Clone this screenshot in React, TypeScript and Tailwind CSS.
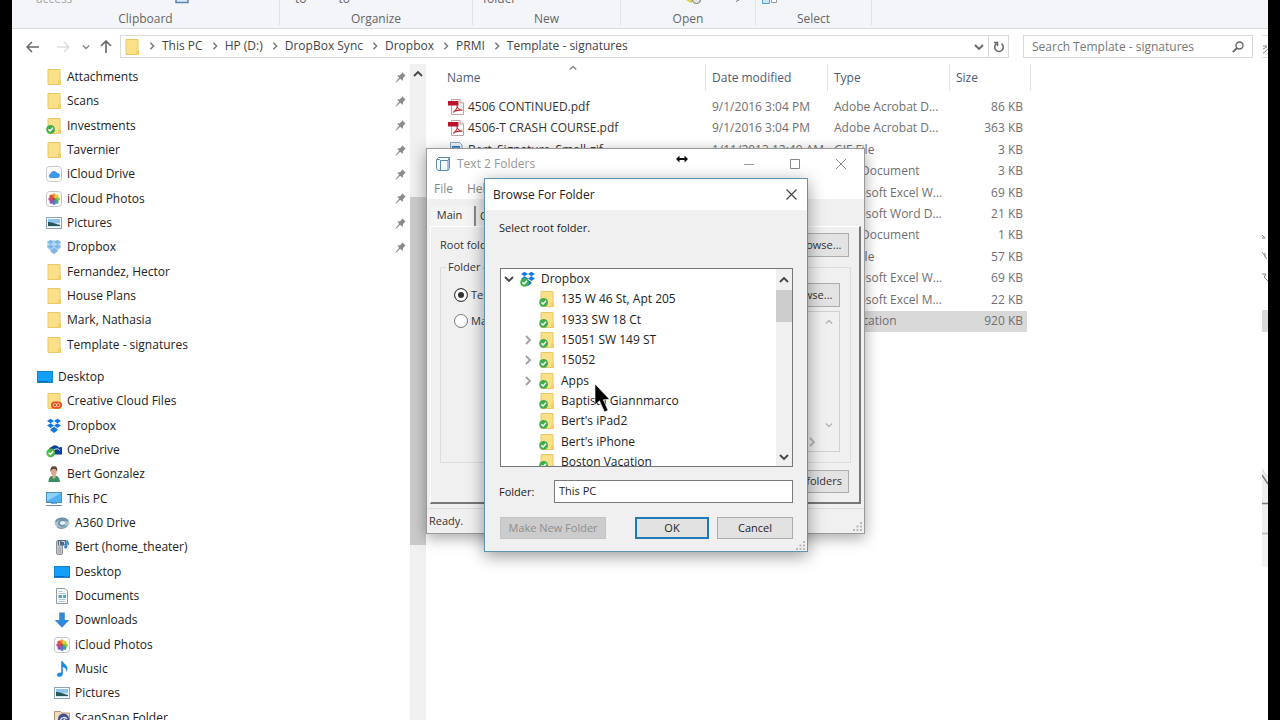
import type { ReactNode } from "react";

type IconName =
  | "folder"
  | "folderSync"
  | "folderCloud"
  | "icloud"
  | "photos"
  | "pictures"
  | "dropbox"
  | "dropboxPale"
  | "dropboxSync"
  | "desktop"
  | "onedrive"
  | "user"
  | "pc"
  | "a360"
  | "theater"
  | "documents"
  | "downloads"
  | "music"
  | "scansnap"
  | "pdf"
  | "gif";

const DROPBOX =
  "M4.6 .8 8 3 4.6 5.3 1 3zM11.4 .8 15 3 11.4 5.3 8 3zM1 7.6 4.6 5.3 8 7.6 4.6 9.9zM15 7.6 11.4 5.3 8 7.6 11.4 9.9zM4.6 11 8 8.7 11.4 11v1.5L8 15l-3.4-2.5z";

const FOLDER = (
  <>
    <path d="M2 .5h12v10.5l.5.5v4H2z" fill="#fbe08a" stroke="#e9c766" strokeWidth="1" />
    <path d="M12 11.5h2.5v4H12z" fill="#f3cf69" />
  </>
);

const CHECK = (
  <>
    <circle cx="4.6" cy="11.4" r="4.4" fill="#3fae49" />
    <path d="M2.4 11.4 4.1 13 7 9.8" fill="none" stroke="#fff" strokeWidth="1.5" />
  </>
);

const ICONS: Record<IconName, ReactNode> = {
  folder: FOLDER,
  folderSync: (
    <>
      {FOLDER}
      {CHECK}
    </>
  ),
  folderCloud: (
    <>
      {FOLDER}
      <rect x="5" y="8.5" width="11" height="7.2" rx="3.6" fill="#e2501f" />
      <circle cx="8.8" cy="12.1" r="1.7" fill="none" stroke="#fbd9cb" strokeWidth=".8" />
      <circle cx="12.2" cy="12.1" r="1.7" fill="none" stroke="#fbd9cb" strokeWidth=".8" />
    </>
  ),
  icloud: (
    <>
      <rect x=".5" y=".5" width="15" height="15" rx="3" fill="#fff" stroke="#c9c9d2" />
      <path d="M4.6 12a2.1 2.1 0 0 1-.3-4.1 3.7 3.7 0 0 1 6.9-1A2.6 2.6 0 0 1 12 12z" fill="#3b97ee" />
    </>
  ),
  photos: (
    <>
      <rect x=".5" y=".5" width="15" height="15" rx="3" fill="#fff" stroke="#c4c4cc" />
      <ellipse cx="8" cy="4.8" rx="1.9" ry="2.5" fill="#f49b24" />
      <ellipse cx="10.4" cy="5.8" rx="1.9" ry="2.5" fill="#e8d22c" transform="rotate(45 10.4 5.8)" />
      <ellipse cx="11.3" cy="8.2" rx="2.5" ry="1.9" fill="#8cc63f" />
      <ellipse cx="10.3" cy="10.5" rx="1.9" ry="2.5" fill="#3ea487" transform="rotate(-45 10.3 10.5)" />
      <ellipse cx="8" cy="11.4" rx="1.9" ry="2.5" fill="#4f7fd0" />
      <ellipse cx="5.7" cy="10.4" rx="1.9" ry="2.5" fill="#8c55b0" transform="rotate(45 5.7 10.4)" />
      <ellipse cx="4.7" cy="8.1" rx="2.5" ry="1.9" fill="#c6458b" />
      <ellipse cx="5.6" cy="5.8" rx="1.9" ry="2.5" fill="#e4503a" transform="rotate(-45 5.6 5.8)" />
      <circle cx="8" cy="8.1" r="1.3" fill="#8a5a4a" />
    </>
  ),
  pictures: (
    <>
      <rect x=".5" y="2.5" width="15" height="11" fill="#f6fafc" stroke="#8fa3b5" />
      <path d="M2 4h12v4H2z" fill="#8fc4ef" />
      <path d="M2 8h12v4H2z" fill="#d5e6ee" />
      <path d="M2 7c3 0 6 1.3 12 3v1H2z" fill="#25565a" />
    </>
  ),
  dropbox: <path d={DROPBOX} fill="#1379dc" />,
  dropboxPale: (
    <>
      <path d="M1.2 3 8 1 14.8 3v6L8 15.5 1.2 9z" fill="#b9d9f5" />
      <path d={DROPBOX} fill="#7fb5e8" />
    </>
  ),
  dropboxSync: (
    <>
      <path d={DROPBOX} fill="#1379dc" />
      {CHECK}
    </>
  ),
  desktop: (
    <>
      <rect x="0" y="2" width="16" height="12" fill="#1583d4" />
      <rect x="1" y="3" width="14" height="10" fill="#12a0fb" />
      <path d="M1 12.5h10M12 12.5h1M14 12.5h1" stroke="#0b6cb5" />
    </>
  ),
  onedrive: (
    <>
      <path d="M3 9a3 3 0 0 1 2.5-4A4.5 4.5 0 0 1 13 5.5 3.5 3.5 0 0 1 16 12.5H5z" fill="#0d3f94" />
      <path d="M6.5 12.5A3.5 3.5 0 0 1 9 7.2a4 4 0 0 1 5 1.3" fill="none" stroke="#cfe0f5" />
      <circle cx="4.8" cy="10.8" r="4.4" fill="#4cb749" />
      <path d="M2.6 10.8 4.3 12.5 7.3 9.2" fill="none" stroke="#fff" strokeWidth="1.5" />
    </>
  ),
  user: (
    <>
      <path d="M2.5 16c0-4.5 2-6.5 5.5-6.5s5.5 2 6 6.5z" fill="#3b8d64" />
      <path d="M6.5 9.5h3v2L8 13l-1.5-1.5z" fill="#d9a98a" />
      <ellipse cx="7.8" cy="5.5" rx="2.9" ry="4" fill="#dca78a" />
      <path d="M4.5 6C4 2 5.5.3 8 .3S12 2 11 6c-.5-2.5-1.5-3-3-3s-3 .5-3.5 3z" fill="#5d4a3f" />
    </>
  ),
  pc: (
    <>
      <rect x=".5" y="1.5" width="15" height="10" fill="#4fb2f3" stroke="#4f8fbd" />
      <path d="M1 2h14L1 10z" fill="#8dd0fa" />
      <path d="M5 12.5h6" stroke="#6ab4e0" />
      <path d="M0 14.5h16" stroke="#7e8c99" />
    </>
  ),
  a360: (
    <>
      <ellipse cx="8" cy="8" rx="7.5" ry="5" fill="#b4c5d2" />
      <path d="M2 7c1-4 9-5 12-1-2-1-7-2-9 1-1 3 3 5 6 3" fill="none" stroke="#6f92a9" strokeWidth="1.8" />
      <ellipse cx="8.5" cy="8" rx="2.6" ry="1.7" fill="#edf4f8" />
      <path d="M3 11.5c2 2.5 7 2.5 10-.5" fill="none" stroke="#7d98aa" strokeWidth="1.4" />
    </>
  ),
  theater: (
    <>
      <rect x="2.5" y="1.5" width="6" height="14" rx="1.5" fill="#c7cacf" stroke="#8c9197" />
      <path d="M4 9h3M4 11h3M4 13h3" stroke="#8b9097" strokeWidth=".8" />
      <rect x="4" y="1" width="8" height="5.5" fill="#54687a" />
      <path d="M5.5 2v4M7.5 2.5h3v3" stroke="#c4d8e6" fill="none" />
      <path d="M12.8 8V1.5c.5 1.5 2.2 2 1.700 4.500" fill="none" stroke="#2a84d2" strokeWidth="1.3" />
      <circle cx="11.6" cy="8" r="1.5" fill="#2a84d2" />
    </>
  ),
  documents: (
    <>
      <path d="M2.5.5h8.500l2.500 2.500v12.500h-11z" fill="#fbfbfb" stroke="#9a9a9a" />
      <path d="M4.500 3.500h4M4.500 5.500h7M4.500 11.500h7M4.500 13.500h7" stroke="#a5cadd" />
      <path d="M4.500 7h3.500v3H4.500zM9 7h3v3H9z" fill="#5e9fc4" />
    </>
  ),
  downloads: <path d="M5.2.5h5.600v7.500h4.500L8 15.700.7 8h4.500z" fill="#3289dc" />,
  music: (
    <path
      d="M7.200.3h1.600c.3 2.400 4.600 3.500 4.600 7.200 0 1.500-.5 2.500-1.200 3.300.5-2.600-.9-4.200-3.400-4.800v6.800c0 1.900-1.300 3-3.300 3-1.500 0-2.500-.7-2.500-1.900 0-1.600 2-2.700 4.200-2.200z"
      fill="#1e8ae0"
    />
  ),
  scansnap: (
    <>
      <path d="M.5 1.500h6l1.500 1.500h7.500v13H.5z" fill="#f3d9c0" stroke="#b9977c" />
      <circle cx="9.500" cy="9" r="5.500" fill="#41518f" />
      <path d="M6.500 11c0-4 5-4.500 6.500-2M8 12l3-3" fill="none" stroke="#dfe5f5" strokeWidth="1.400" />
    </>
  ),
  pdf: (
    <>
      <path d="M3.500.5h8.500l3.500 3.500v11.500h-12z" fill="#fff" stroke="#c3a2a2" />
      <path d="M12 .5V4h3.500" fill="#eee" stroke="#c3a2a2" />
      <path d="M0 2h10.500v4.500H0z" fill="#b9142a" />
      <path
        d="M9 6c.7 2.500.2 4-3.700 7.500M9 6c0 3 2.500 5 5.500 5.200-3-.5-6 .3-8.500 1.300"
        fill="none"
        stroke="#c22a35"
        strokeWidth="1.200"
      />
    </>
  ),
  gif: (
    <>
      <path d="M2.500.5h9l2.500 2.500v12.500H2.500z" fill="#e9f3fb" stroke="#8aa3b8" />
      <path d="M4.500 4.500h7v6h-7z" fill="#5aa2dc" stroke="#2a6fb0" />
    </>
  ),
};

function Icon({ name }: { name: IconName }) {
  return (
    <svg viewBox="0 0 16 16" className="size-4 shrink-0" aria-hidden="true">
      {ICONS[name]}
    </svg>
  );
}

const CHEVRONS = {
  up: "M1 7 5 3 9 7",
  down: "M1 3 5 7 9 3",
  right: "M3 1 7 5 3 9",
};

function Chevron({ dir, className }: { dir: keyof typeof CHEVRONS; className: string }) {
  return (
    <svg viewBox="0 0 10 10" className={`shrink-0 ${className}`} fill="none" stroke="currentColor" aria-hidden="true">
      <path d={CHEVRONS[dir]} strokeWidth="1.8" />
    </svg>
  );
}

function Pin() {
  return (
    <svg viewBox="0 0 11 11" className="size-[11px] shrink-0" aria-hidden="true">
      <path
        d="M7.3.3 10.7 3.7 9.6 4.300 8 6.300 7.700 9 5.200 6.800 1 10.700.5 10.200 4.200 5.800 2.200 3.500 5 3.200 6.800 1.500z"
        fill="#8a8a8a"
      />
    </svg>
  );
}

function Grip() {
  return (
    <svg viewBox="0 0 9 9" className="size-[9px] shrink-0" fill="#b9b9b9" aria-hidden="true">
      <path d="M7 0h2v2H7zM7 3.500h2v2H7zM7 7h2v2H7zM3.500 3.500h2v2h-2zM3.500 7h2v2h-2zM0 7h2v2H0z" />
    </svg>
  );
}

interface NavItem {
  icon: IconName;
  label: string;
  pinned?: boolean;
  indent: "root" | "child" | "leaf";
}

const QUICK_ACCESS: NavItem[] = [
  { icon: "folder", label: "Attachments", pinned: true, indent: "child" },
  { icon: "folder", label: "Scans", pinned: true, indent: "child" },
  { icon: "folderSync", label: "Investments", pinned: true, indent: "child" },
  { icon: "folder", label: "Tavernier", pinned: true, indent: "child" },
  { icon: "icloud", label: "iCloud Drive", pinned: true, indent: "child" },
  { icon: "photos", label: "iCloud Photos", pinned: true, indent: "child" },
  { icon: "pictures", label: "Pictures", pinned: true, indent: "child" },
  { icon: "dropboxPale", label: "Dropbox", pinned: true, indent: "child" },
  { icon: "folder", label: "Fernandez, Hector", indent: "child" },
  { icon: "folder", label: "House Plans", indent: "child" },
  { icon: "folder", label: "Mark, Nathasia", indent: "child" },
  { icon: "folder", label: "Template - signatures", indent: "child" },
];

const DESKTOP_TREE: NavItem[] = [
  { icon: "desktop", label: "Desktop", indent: "root" },
  { icon: "folderCloud", label: "Creative Cloud Files", indent: "child" },
  { icon: "dropbox", label: "Dropbox", indent: "child" },
  { icon: "onedrive", label: "OneDrive", indent: "child" },
  { icon: "user", label: "Bert Gonzalez", indent: "child" },
  { icon: "pc", label: "This PC", indent: "child" },
  { icon: "a360", label: "A360 Drive", indent: "leaf" },
  { icon: "theater", label: "Bert (home_theater)", indent: "leaf" },
  { icon: "desktop", label: "Desktop", indent: "leaf" },
  { icon: "documents", label: "Documents", indent: "leaf" },
  { icon: "downloads", label: "Downloads", indent: "leaf" },
  { icon: "photos", label: "iCloud Photos", indent: "leaf" },
  { icon: "music", label: "Music", indent: "leaf" },
  { icon: "pictures", label: "Pictures", indent: "leaf" },
  { icon: "scansnap", label: "ScanSnap Folder", indent: "leaf" },
];

const INDENT = { root: "pl-[25px]", child: "pl-[34px]", leaf: "pl-[42px]" };

function NavList({ items, className }: { items: NavItem[]; className: string }) {
  return (
    <ul className={`grid auto-rows-fr ${className}`}>
      {items.map((item, index) => (
        <li key={index} className={`flex items-center gap-[5px] pr-1 ${INDENT[item.indent]}`}>
          <Icon name={item.icon} />
          <span className="flex-1 whitespace-nowrap">{item.label}</span>
          {item.pinned && <Pin />}
        </li>
      ))}
    </ul>
  );
}

function Sidebar() {
  return (
    <div className="flex w-[414px] shrink-0 text-[#222]">
      <nav className="flex flex-1 flex-col gap-2 pt-px">
        <NavList items={QUICK_ACCESS} className="h-[292px] shrink-0" />
        <NavList items={DESKTOP_TREE} className="h-[365px] shrink-0" />
      </nav>
      <div className="flex w-4 flex-col items-center bg-[#f0f0f0]">
        <button aria-label="Scroll up" className="mb-[113px] flex h-5 shrink-0 items-center">
          <Chevron dir="up" className="size-2.5 text-[#444]" />
        </button>
        <div className="h-[348px] w-full shrink-0 bg-[#cbcbcb]" />
      </div>
    </div>
  );
}

/* Lower edge of the ribbon: button captions above, group names below */
function RibbonGroup({ name, className, children }: { name: string; className: string; children?: ReactNode }) {
  return (
    <div className={`flex h-[25px] shrink-0 flex-col border-r border-[#dfe1e6] ${className}`}>
      <div className="flex h-[7px] shrink-0 items-end overflow-hidden text-[#666]">{children}</div>
      <div className="pt-1 text-center leading-4 text-[#666]">{name}</div>
    </div>
  );
}

function Ribbon() {
  return (
    <div className="flex h-[29px] shrink-0 border-b border-[#d9dbe0] bg-[#f4f5f9]">
      <RibbonGroup name="Clipboard" className="w-[268px]">
        <span className="ml-6 leading-4 text-[#a8a8a8]">access</span>
        <svg viewBox="0 0 14 7" className="ml-[103px] h-[7px] w-3.5" aria-hidden="true">
          <path d="M1 0v2.500h12V0" fill="#dfe8f3" stroke="#5d82b5" strokeWidth="1.500" />
        </svg>
      </RibbonGroup>
      <RibbonGroup name="Organize" className="w-[193px]">
        <span className="ml-[15px] leading-4">to</span>
        <span className="ml-8 leading-4">to</span>
      </RibbonGroup>
      <RibbonGroup name="New" className="w-[148px]">
        <span className="ml-2.5 leading-4">folder</span>
      </RibbonGroup>
      <RibbonGroup name="Open" className="w-[135px]">
        <svg viewBox="0 0 56 7" className="ml-[63px] h-[7px] w-14" aria-hidden="true">
          <path d="M2 0h9L7 3z" fill="#d9cf3f" />
          <circle cx="12.500" cy="-.5" r="4" fill="#e2e2e2" stroke="#8d8d8d" strokeWidth="1.200" />
          <path d="M52 1.500 55 0" stroke="#777" />
        </svg>
      </RibbonGroup>
      <RibbonGroup name="Select" className="w-[116px]">
        <svg viewBox="0 0 16 7" className="ml-1.5 h-[7px] w-4" aria-hidden="true">
          <path d="M.5 0v3.500h7V0" fill="#cfe6f7" stroke="#4ea0dc" />
          <path d="M9.500 0v2.500h5V0" fill="#fff" stroke="#8b9aa8" />
        </svg>
      </RibbonGroup>
    </div>
  );
}

const CRUMBS = ["This PC", "HP (D:)", "DropBox Sync", "Dropbox", "PRMI", "Template - signatures"];

function AddressBar() {
  return (
    <div className="flex h-[35px] shrink-0 items-center pr-[9px] text-[#444]">
      <button aria-label="Back" className="ml-3.5">
        <svg viewBox="0 0 14 12" className="h-3 w-3.5" fill="none" stroke="#666" strokeWidth="1.5">
          <path d="M13 6H1M6 1 1 6l5 5" />
        </svg>
      </button>
      <button aria-label="Forward" className="ml-4">
        <svg viewBox="0 0 14 12" className="h-3 w-3.5" fill="none" stroke="#dedede" strokeWidth="1.5">
          <path d="M1 6h12M8 1l5 5-5 5" />
        </svg>
      </button>
      <button aria-label="Recent locations" className="ml-3">
        <Chevron dir="down" className="size-2 text-[#888]" />
      </button>
      <button aria-label="Up" className="ml-2.5">
        <svg viewBox="0 0 12 14" className="h-3.5 w-3" fill="none" stroke="#666" strokeWidth="1.6">
          <path d="M6 13V1M1 6l5-5 5 5" />
        </svg>
      </button>
      <div className="ml-2 flex h-[23px] flex-1 items-center border border-[#d9d9d9] pl-[3px]">
        <Icon name="folder" />
        <ol className="flex flex-1 pb-0.5">
          {CRUMBS.map((crumb) => (
            <li key={crumb} className="flex items-center whitespace-nowrap">
              <Chevron dir="right" className="mr-1.5 ml-2 size-2 text-[#777]" />
              <a href="#">{crumb}</a>
            </li>
          ))}
        </ol>
        <button aria-label="Previous locations" className="mr-1">
          <Chevron dir="down" className="size-2.5 text-[#666]" />
        </button>
        <button aria-label="Refresh" className="flex h-full w-5 items-center justify-center border-l border-[#d9d9d9]">
          <svg viewBox="0 0 12 12" className="size-3" fill="none" stroke="#666" strokeWidth="1.5">
            <path d="M8.500 2.700A4.300 4.300 0 1 1 3.500 2.700M1 1.500H4.500V5" />
          </svg>
        </button>
      </div>
      <label className="ml-3.5 flex h-[23px] w-[230px] items-center border border-[#d9d9d9] px-2">
        <input
          aria-label="Search Template - signatures"
          placeholder="Search Template - signatures"
          className="min-w-0 flex-1 outline-none placeholder:text-[#777]"
        />
        <svg viewBox="0 0 12 12" className="size-3" fill="none" stroke="#666" aria-hidden="true">
          <circle cx="7.500" cy="4.500" r="3.500" strokeWidth="1.400" />
          <path d="M5 7 .8 11.200" strokeWidth="1.800" />
        </svg>
      </label>
    </div>
  );
}

interface FileRow {
  icon: IconName;
  name: string;
  date: string;
  type: string;
  size: string;
  selected?: boolean;
}

const FILES: FileRow[] = [
  { icon: "pdf", name: "4506 CONTINUED.pdf", date: "9/1/2016 3:04 PM", type: "Adobe Acrobat D...", size: "86 KB" },
  { icon: "pdf", name: "4506-T CRASH COURSE.pdf", date: "9/1/2016 3:04 PM", type: "Adobe Acrobat D...", size: "363 KB" },
  { icon: "gif", name: "Bert_Signature_Small.gif", date: "1/11/2013 12:49 AM", type: "GIF File", size: "3 KB" },
  { icon: "folder", name: "", date: "", type: "Text Document", size: "3 KB" },
  { icon: "folder", name: "", date: "", type: "Microsoft Excel W...", size: "69 KB" },
  { icon: "folder", name: "", date: "", type: "Microsoft Word D...", size: "21 KB" },
  { icon: "folder", name: "", date: "", type: "Text Document", size: "1 KB" },
  { icon: "folder", name: "", date: "", type: "GIF File", size: "57 KB" },
  { icon: "folder", name: "", date: "", type: "Microsoft Excel W...", size: "69 KB" },
  { icon: "folder", name: "", date: "", type: "Microsoft Excel M...", size: "22 KB" },
  { icon: "folder", name: "", date: "", type: "Application", size: "920 KB", selected: true },
];

function FileList() {
  return (
    <div className="flex-1 pl-3.5">
      <table className="h-[268px] w-[591px] table-fixed border-collapse text-[#707070]">
        <thead>
          <tr className="h-8 text-left align-top text-[#4c5b75]">
            <th className="w-[266px] p-0 font-normal">
              <div className="flex h-[27px] items-center border-r border-[#e2e2e2] pl-[7px]">
                <span className="w-[122px]">Name</span>
                <Chevron dir="up" className="size-2 self-start text-[#888]" />
              </div>
            </th>
            <th className="w-[122px] p-0 font-normal">
              <div className="flex h-[27px] items-center border-r border-[#e2e2e2] pl-1.5">Date modified</div>
            </th>
            <th className="w-[122px] p-0 font-normal">
              <div className="flex h-[27px] items-center border-r border-[#e2e2e2] pl-1.5">Type</div>
            </th>
            <th className="w-[81px] p-0 font-normal">
              <div className="flex h-[27px] items-center border-r border-[#e2e2e2] pl-1.5">Size</div>
            </th>
          </tr>
        </thead>
        <tbody>
          {FILES.map((file, index) => (
            <tr
              key={index}
              className={`h-[21px] leading-4 whitespace-nowrap ${
                file.selected ? "bg-[linear-gradient(to_right,#d9d9d9_587px,transparent_587px)]" : ""
              }`}
            >
              <td className="p-0 pl-2">
                <div className="flex items-center gap-1 text-[#333]">
                  <Icon name={file.icon} />
                  {file.name}
                </div>
              </td>
              <td className="p-0 pl-1.5">{file.date}</td>
              <td className="p-0 pl-1.5">{file.type}</td>
              <td className="p-0 pr-2 text-right">{file.size}</td>
            </tr>
          ))}
        </tbody>
      </table>
    </div>
  );
}

/* Sliver of the neighbouring screen along the right edge */
function EdgeSliver() {
  return (
    <svg viewBox="0 0 6 691" className="h-[691px] w-1.5 shrink-0" fill="none" aria-hidden="true">
      <path d="M0 6.500h6M0 28.500h6" stroke="#dcdcdc" />
      <path d="M1 17h4M1 20l4-2M1 24c3 0 3-4 5-4" stroke="#888" />
      <path d="M0 206l3 3H0M0 223l5 7M3 224v4M0 245h4l-2 3 4 4" stroke="#888" />
      <path d="M0 281h6v22H0z" fill="#d9d9d9" />
      <path d="M0 439l6 8v56H0z" fill="#eee" />
      <path d="M0 440l6 9" stroke="#ddd" />
      <path d="M0 446l6 9M0 474.500h6" stroke="#777" strokeWidth="1.500" />
      <path d="M0 504.500h6" stroke="#bbb" strokeWidth="2" />
      <path d="M0 506h6v32H0z" fill="#f1f1f1" />
    </svg>
  );
}

function TextToFoldersWindow() {
  return (
    <section
      aria-label="Text 2 Folders"
      className="absolute top-[148px] left-[426px] flex w-[439px] flex-col border border-[#9a9a9a] bg-[#f0f0f0] text-[11px] text-[#333] shadow-[0_4px_14px_rgba(0,0,0,0.35)]"
    >
      <header className="flex h-[29px] items-center bg-white pl-2 text-xs text-[#999]">
        <svg viewBox="0 0 16 16" className="size-4" fill="#f4f9fd" stroke="#5f86ad" aria-hidden="true">
          <path d="M1.500 3.500 3.500 1.500h11v11l-1.500 2H3L1.500 12.500z" />
          <path d="M1.500 3.500h3l1 1v10M5.500 4.500h7.500v10M13 4.500l1.500-3" />
        </svg>
        <h2 className="ml-1.5 flex-1">Text 2 Folders</h2>
        <button aria-label="Minimize" className="flex w-[46px] justify-center">
          <svg viewBox="0 0 10 10" className="size-2.5" stroke="#999">
            <path d="M0 5.500h10" />
          </svg>
        </button>
        <button aria-label="Maximize" className="flex w-[46px] justify-center">
          <svg viewBox="0 0 10 10" className="size-2.5" fill="none" stroke="#888">
            <path d="M.5.5h9v9h-9z" />
          </svg>
        </button>
        <button aria-label="Close" className="flex w-[46px] justify-center">
          <svg viewBox="0 0 10 10" className="size-2.5" stroke="#888">
            <path d="M0 0 10 10M10 0 0 10" />
          </svg>
        </button>
      </header>
      <div className="flex h-[21px] items-end gap-3.5 bg-white pb-0.5 pl-[7px] text-xs text-[#888]">
        <button>File</button>
        <button>Help</button>
      </div>
      <div className="flex pt-[7px] pl-1">
        <button className="h-5 w-[45px] border-r-2 border-[#888] bg-[#f4f4f4] pr-1.5 pb-0.5">Main</button>
        <button className="pl-1">Options</button>
      </div>
      <div className="mx-[3px] flex flex-col border-t border-r-2 border-b-2 border-l border-t-white border-r-[#777] border-b-[#777] border-l-white pt-1.5 pl-[9px]">
        <div className="flex items-center justify-between pr-2.5">
          <span>Root folder:</span>
          <button className="h-6 w-[62px] border border-[#adadad] bg-[#e3e3e3]">Browse...</button>
        </div>
        <fieldset className="mt-0.5 mr-2 h-[204px] border border-[#dcdcdc] pr-2.5 pl-[13px]">
          <legend className="-ml-2 px-0.5 leading-4">Folder options</legend>
          <div className="mt-2 flex items-center justify-between">
            <label className="flex items-center gap-[3px]">
              <input
                type="radio"
                name="source"
                defaultChecked
                className="size-3.5 appearance-none rounded-full border border-[#444] bg-white checked:bg-[#333] checked:shadow-[inset_0_0_0_3px_white]"
              />
              Text file
            </label>
            <button className="h-6 w-[62px] border border-[#adadad] bg-[#e3e3e3]">Browse...</button>
          </div>
          <div className="mt-1 flex justify-between">
            <label className="flex h-5 items-center gap-[3px]">
              <input
                type="radio"
                name="source"
                className="size-3.5 appearance-none rounded-full border border-[#777] bg-white checked:bg-[#333]"
              />
              Manual
            </label>
            <div className="flex h-[141px] w-[300px] border border-[#d0d0d0] text-[#b5b5b5]">
              <div className="flex flex-1 items-end justify-end pr-0.5 pb-1">
                <Chevron dir="right" className="size-2.5" />
              </div>
              <div className="flex w-5 flex-col items-center justify-between pt-1.5 pb-[22px]">
                <Chevron dir="up" className="size-2" />
                <Chevron dir="down" className="size-2" />
              </div>
            </div>
          </div>
        </fieldset>
        <div className="flex justify-end pt-[7px] pr-2.5 pb-[9px]">
          <button className="h-[23px] border border-[#adadad] bg-[#e3e3e3] px-1.5">Create folders</button>
        </div>
      </div>
      <footer className="mt-1 flex h-[25px] items-center justify-between border-t border-[#dcdcdc] px-0.5">
        <span>Ready.</span>
        <span className="self-end pb-0.5">
          <Grip />
        </span>
      </footer>
    </section>
  );
}

interface TreeItem {
  label: string;
  expandable?: boolean;
}

const TREE: TreeItem[] = [
  { label: "135 W 46 St, Apt 205" },
  { label: "1933 SW 18 Ct" },
  { label: "15051 SW 149 ST", expandable: true },
  { label: "15052", expandable: true },
  { label: "Apps", expandable: true },
  { label: "Baptista Giannmarco" },
  { label: "Bert's iPad2" },
  { label: "Bert's iPhone" },
  { label: "Boston Vacation" },
];

function BrowseDialog() {
  return (
    <section
      role="dialog"
      aria-label="Browse For Folder"
      className="absolute top-[178px] left-[484px] flex w-[324px] flex-col border border-[#5f93b3] bg-[#f0f0f0] text-[11px] text-[#222] shadow-[0_4px_16px_rgba(0,0,0,0.4)]"
    >
      <header className="flex h-[31px] items-center justify-between bg-white pr-2.5 pl-2">
        <h2 className="text-xs">Browse For Folder</h2>
        <button aria-label="Close">
          <svg viewBox="0 0 11 11" className="size-[11px]" stroke="#444" strokeWidth="1.2">
            <path d="M.5.5l10 10M10.5.5l-10 10" />
          </svg>
        </button>
      </header>
      <div className="flex flex-col px-3.5">
        <p className="h-[58px] pt-[11px]">Select root folder.</p>
        <div className="ml-px flex h-[199px] overflow-hidden border border-[#777] bg-white text-xs">
          <ul className="grid h-[203px] flex-1 auto-rows-fr">
            <li className="flex items-center pl-[3px]">
              <Chevron dir="down" className="size-2.5 text-[#444]" />
              <span className="ml-1.5 flex items-center gap-[5px]">
                <Icon name="dropboxSync" />
                Dropbox
              </span>
            </li>
            {TREE.map((item) => (
              <li key={item.label} className="flex items-center pl-[22px] whitespace-nowrap">
                <span className="w-4">
                  {item.expandable && <Chevron dir="right" className="size-2.5 text-[#a0a0a0]" />}
                </span>
                <span className="flex items-center gap-1.5">
                  <Icon name="folderSync" />
                  {item.label}
                </span>
              </li>
            ))}
          </ul>
          <div className="flex w-4 flex-col items-center bg-[#f0f0f0]">
            <button aria-label="Scroll tree up" className="flex h-[21px] items-center">
              <Chevron dir="up" className="size-2.5 text-[#444]" />
            </button>
            <div className="h-8 w-full bg-[#cdcdcd]" />
            <button aria-label="Scroll tree down" className="mt-auto flex h-[18px] items-center">
              <Chevron dir="down" className="size-2.5 text-[#444]" />
            </button>
          </div>
        </div>
        <div className="mt-[13px] flex items-center">
          <label htmlFor="folder" className="w-[55px] pt-0.5">
            Folder:
          </label>
          <input
            id="folder"
            defaultValue="This PC"
            className="h-[23px] min-w-0 flex-1 border border-[#7a7a7a] bg-white pb-0.5 pl-1 outline-none"
          />
        </div>
        <div className="mt-3.5 flex pl-px">
          <button disabled className="mr-[29px] h-[22px] w-[106px] border border-[#c4c4c4] bg-[#cccccc] text-[#8e8e8e]">
            Make New Folder
          </button>
          <button className="mr-2 h-[22px] w-[74px] border-2 border-[#1f7bb8] bg-[#e2e2e2]">OK</button>
          <button className="h-[22px] flex-1 border border-[#adadad] bg-[#e2e2e2]">Cancel</button>
        </div>
      </div>
      <div className="flex h-3 items-end justify-end pr-0.5 pb-px">
        <Grip />
      </div>
    </section>
  );
}

export default function App() {
  return (
    <div className="relative h-screen overflow-hidden bg-black px-3 font-['Open_Sans','Noto_Sans',sans-serif] text-xs">
      <div className="flex h-full flex-col bg-white">
        <Ribbon />
        <div className="flex min-h-0 flex-1">
          <main className="flex min-w-0 flex-1 flex-col">
            <AddressBar />
            <div className="flex min-h-0 flex-1">
              <Sidebar />
              <FileList />
            </div>
          </main>
          <EdgeSliver />
        </div>
      </div>

      <TextToFoldersWindow />
      <BrowseDialog />

      {/* Pointers */}
      <svg viewBox="0 0 12 8" className="absolute top-[155px] left-[676px] h-2 w-3" aria-hidden="true">
        <path d="M0 4 3.500.5V3h5V.5L12 4 8.500 7.500V5h-5v2.500z" fill="#111" />
      </svg>
      <svg viewBox="0 0 18 30" className="absolute top-[383px] left-[594px] h-[30px] w-[18px]" aria-hidden="true">
        <path d="M1 1v21l4.500-4.200L10.500 29l3.500-1.700-4.700-10.500 6.200-.5z" fill="#000" stroke="#fff" strokeWidth=".6" />
      </svg>
    </div>
  );
}
